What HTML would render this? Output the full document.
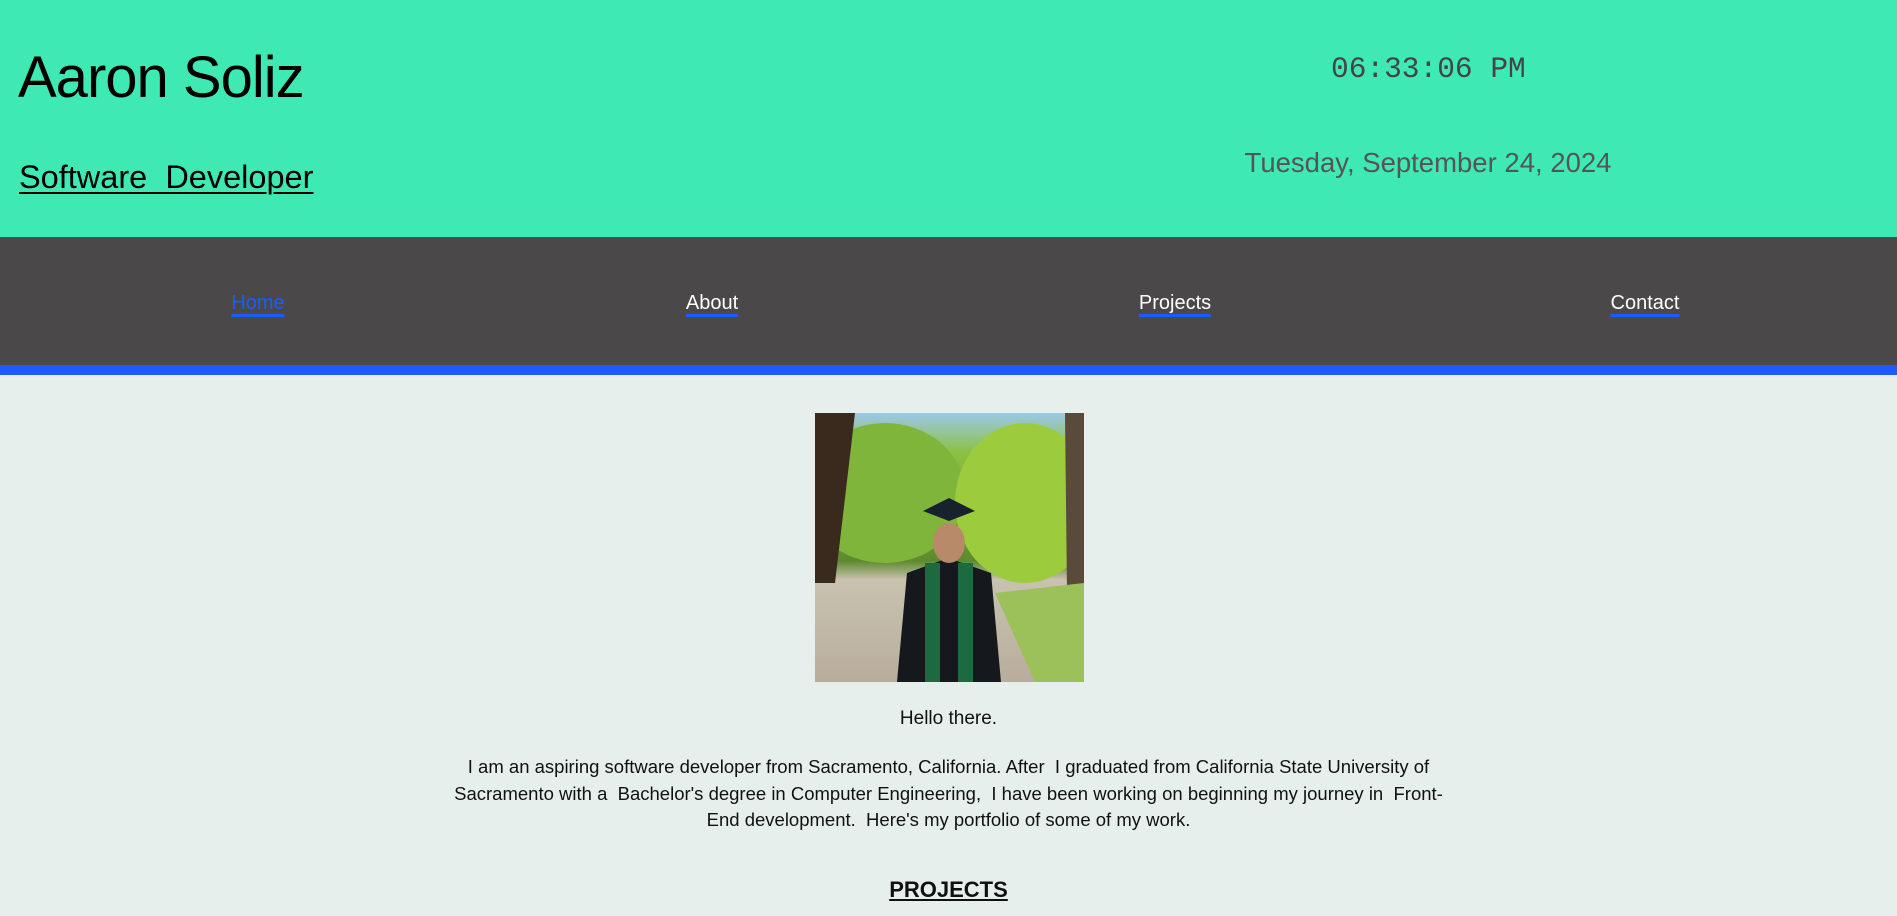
<!DOCTYPE html>
<html><head><style>
*{margin:0;padding:0;box-sizing:border-box}
body{width:1897px;height:916px;overflow:hidden;background:#e6efec;font-family:"Liberation Sans",sans-serif;position:relative}
.hdr{position:absolute;left:0;top:0;width:1897px;height:237px;background:#3ee9b4}
.name{position:absolute;left:18px;top:44px;font-size:58px;color:#000;letter-spacing:-1px}
.role{position:absolute;left:19px;top:159px;font-size:32.5px;color:#000;text-decoration:underline;text-decoration-thickness:2px;text-underline-offset:4px;white-space:pre}
.clock{position:absolute;left:1331px;top:52px;font-family:"Liberation Mono",monospace;font-size:29.5px;color:#444;white-space:nowrap}
.date{position:absolute;left:1242px;top:147px;width:372px;text-align:center;font-size:27.5px;color:#555;white-space:nowrap}
.nav{position:absolute;left:0;top:237px;width:1897px;height:128px;background:#4a4849}
.bar{position:absolute;left:0;top:365px;width:1897px;height:10px;background:#1a5cff}
.nav a{position:absolute;top:55px;font-size:20px;color:#fff;text-decoration:none;border-bottom:3px solid #1a5cff;line-height:22px;transform:translateX(-50%)}
.photo{position:absolute;left:815px;top:413px;width:269px;height:269px;overflow:hidden}
.t{position:absolute;left:0;width:1897px;text-align:center;color:#111}
</style></head><body>
<div class="hdr">
<div class="name">Aaron Soliz</div>
<div class="role">Software  Developer</div>
<div class="clock">06:33:06 PM</div>
<div class="date">Tuesday, September 24, 2024</div>
</div>
<div class="nav">
<a style="left:258px;color:#1a5cff">Home</a>
<a style="left:712px">About</a>
<a style="left:1175px">Projects</a>
<a style="left:1645px">Contact</a>
</div>
<div class="bar"></div>
<div class="photo">
<svg width="269" height="269" viewBox="0 0 269 269">
<defs><linearGradient id="g" x1="0" y1="0" x2="0" y2="1"><stop offset="0" stop-color="#9cc8e8"/><stop offset="0.15" stop-color="#8cc040"/><stop offset="0.55" stop-color="#5e8a2e"/><stop offset="0.62" stop-color="#c9c2b0"/><stop offset="1" stop-color="#b8ad9c"/></linearGradient></defs>
<rect width="269" height="269" fill="url(#g)"/>
<ellipse cx="70" cy="80" rx="80" ry="70" fill="#7fb53a"/>
<ellipse cx="210" cy="90" rx="70" ry="80" fill="#9ccc3e"/>
<path d="M0 0 L40 0 L20 170 L0 170Z" fill="#3a2a1e"/>
<path d="M250 0 L269 0 L269 180 L252 180Z" fill="#5a4a3a"/>
<path d="M180 180 L269 170 L269 269 L220 269Z" fill="#9cc05a"/>
<path d="M82 269 L92 160 L133 145 L176 160 L186 269Z" fill="#15181c"/>
<path d="M110 150 L125 150 L125 269 L110 269Z M143 150 L158 150 L158 269 L143 269Z" fill="#1e6a40"/>
<ellipse cx="134" cy="130" rx="16" ry="20" fill="#b88a6a"/>
<path d="M108 98 L134 85 L160 98 L134 108Z" fill="#17222c"/>
</svg>
</div>
<div class="t" style="top:708px;font-size:19px">Hello there.</div>
<div class="t" style="top:754px;font-size:18.5px;line-height:26.5px"><div style="width:1005px;margin:0 auto">I am an aspiring software developer from Sacramento, California. After &nbsp;I graduated from California State University of Sacramento with a &nbsp;Bachelor's degree in Computer Engineering, &nbsp;I have been working on beginning my journey in &nbsp;Front-End development. &nbsp;Here's my portfolio of some of my work.</div></div>
<div class="t" style="top:877px;font-size:22px;font-weight:bold;text-decoration:underline">PROJECTS</div>
</body></html>
